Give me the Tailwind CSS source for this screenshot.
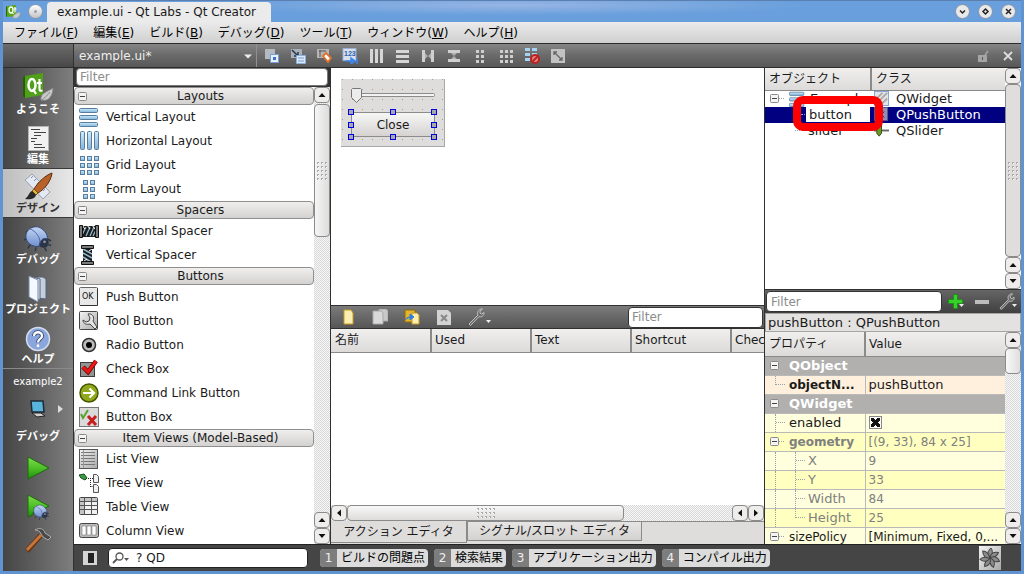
<!DOCTYPE html>
<html lang="ja">
<head>
    <meta charset="UTF-8">
    <meta name="viewport" content="width=device-width, initial-scale=1.0">
    <title>example.ui - Qt Labs - Qt Creator</title>
    <script src="https://cdn.jsdelivr.net/npm/@tailwindcss/browser@4"></script>
</head>
<body class="flex h-screen flex-col overflow-hidden bg-[#5f93d2] px-[3px] pb-[3px] font-['DejaVu_Sans','Noto_Sans_CJK_JP',sans-serif] text-[12px] leading-none text-[#1a1a1a]">

    <!-- shared shapes -->
    <svg class="absolute h-0 w-0">
        <defs>
            <linearGradient id="blue" x1="0" y1="0" x2="0" y2="1"><stop offset="0" stop-color="#d0ecfc"/><stop offset="1" stop-color="#7fb4dc"/></linearGradient>
            <linearGradient id="grey" x1="0" y1="0" x2="1" y2="1"><stop offset="0" stop-color="#f4f4f4"/><stop offset="1" stop-color="#a8a8a8"/></linearGradient>
            <linearGradient id="green" x1="0" y1="0" x2="0" y2="1"><stop offset="0" stop-color="#7fdc4c"/><stop offset="0.500" stop-color="#4fc028"/><stop offset="1" stop-color="#1f8d0c"/></linearGradient>
            <linearGradient id="bug" x1="0" y1="0" x2="0" y2="1"><stop offset="0" stop-color="#c3d6f5"/><stop offset="1" stop-color="#6f8fcf"/></linearGradient>
        </defs>
        <symbol id="up" viewBox="0 0 8 8"><path d="M0.500 6L4 2L7.500 6z" fill="#111"/></symbol>
        <symbol id="down" viewBox="0 0 8 8"><path d="M0.500 2L4 6L7.500 2z" fill="#111"/></symbol>
        <symbol id="left" viewBox="0 0 8 8"><path d="M6 0.500L2 4L6 7.500z" fill="#111"/></symbol>
        <symbol id="right" viewBox="0 0 8 8"><path d="M2 0.500L6 4L2 7.500z" fill="#111"/></symbol>
        <symbol id="minus" viewBox="0 0 9 9"><rect x="0.500" y="0.500" width="8" height="8" rx="1" fill="#f4f4f4" stroke="#8a8a8a"/><path d="M2 4.500h5" stroke="#444"/></symbol>
        <symbol id="grip" viewBox="0 0 12 20">
            <path d="M1 1h2v2h-2zM5 1h2v2h-2zM9 1h2v2h-2zM1 5h2v2h-2zM5 5h2v2h-2zM9 5h2v2h-2zM1 9h2v2h-2zM5 9h2v2h-2zM9 9h2v2h-2zM1 13h2v2h-2zM5 13h2v2h-2zM9 13h2v2h-2zM1 17h2v2h-2zM5 17h2v2h-2zM9 17h2v2h-2z" fill="#a9a9a9"/>
            <path d="M2 2h1v1h-1zM6 2h1v1h-1zM10 2h1v1h-1zM2 6h1v1h-1zM6 6h1v1h-1zM10 6h1v1h-1zM2 10h1v1h-1zM6 10h1v1h-1zM10 10h1v1h-1zM2 14h1v1h-1zM6 14h1v1h-1zM10 14h1v1h-1zM2 18h1v1h-1zM6 18h1v1h-1zM10 18h1v1h-1z" fill="#fff"/>
        </symbol>
        <symbol id="beetle" viewBox="0 0 30 30">
            <path d="M5 9l-3 -2M3 15l-3 1M7 21l-3 4M13 24l-1 4M25 15l4 2M22 24l2 4M26 21l3 1" stroke="#2a3550" stroke-width="1.500" fill="none"/>
            <circle cx="21" cy="19" r="5.500" fill="#2c3448"/>
            <path d="M2 12C2 5 9 1 15 2C21 4 26 10 25 15C21 13 17 16 16 23C9 24 2 19 2 12z" fill="url(#bug)" stroke="#33456e"/>
            <path d="M6 4C12 6 18 13 17 20" stroke="#4a60a0" fill="none"/>
            <circle cx="22" cy="18" r="1.500" fill="#8a93a8"/>
        </symbol>
        <symbol id="wrench" viewBox="0 0 18 18"><path d="M1 16L2.500 17.500L11 8.500C13 9.500 16.500 8 16 4.500L13.500 6L12 5L12 3L14.500 1C11 0.500 8.500 4 10 7z" fill="#6b6b6b" stroke="#c4c4c4"/></symbol>
        <symbol id="vlay" viewBox="0 0 20 20"><g fill="url(#blue)" stroke="#5a7d9c"><rect x="0.500" y="1.500" width="18" height="4" rx="1"/><rect x="0.500" y="8.500" width="18" height="4" rx="1"/><rect x="0.500" y="15.500" width="18" height="4" rx="1"/></g></symbol>
    </svg>

    <!-- window title -->
    <header class="flex h-[22px] shrink-0 items-center border-t border-[#5b7fae] bg-[radial-gradient(ellipse_at_50%_20%,#97b5e4_0%,#689fdc_42%)] pr-[5px] pl-[2px]">
        <svg class="h-4 w-4" viewBox="0 0 16 16"><path d="M2 2l9-1v11l-9 1z" fill="#58a618"/><path d="M1 3l1-1v11l-1-1z" fill="#2c6a08"/><ellipse cx="6" cy="6" rx="2" ry="3" fill="none" stroke="#fff" stroke-width="1.300"/><path d="M7 8l1.500 2M10 3v5.500M8.500 5h3" stroke="#fff" stroke-width="1.200"/><path d="M8 14C8 10 12 9 15.500 8C15 12 13 15 9 14z" fill="#c9c9c9" stroke="#8c9c8c" stroke-width="0.500"/></svg>
        <button class="ml-[7px] h-[15px] w-[15px] rounded-full border border-[#8797ad] bg-linear-to-b from-white to-[#c4c4c4]" aria-label="Window menu"><span class="mx-auto block h-[3px] w-[3px] rounded-full bg-gray-400"></span></button>
        <h1 class="mt-px ml-[4px] flex h-[21px] items-center rounded-t bg-[#ebebeb] pr-[15px] pl-[10px] text-[12px]">example.ui - Qt Labs - Qt Creator</h1>
        <div class="ml-auto flex gap-2">
            <button aria-label="Minimize"><svg class="h-[15px] w-[15px]" viewBox="0 0 15 15"><circle cx="7.500" cy="7.500" r="7" fill="#e9e9e9" stroke="#8592a5"/><path d="M5 6.500l2.500 2.500L10 6.500" stroke="#222" stroke-width="1.500" fill="none"/></svg></button>
            <button aria-label="Maximize"><svg class="h-[15px] w-[15px]" viewBox="0 0 15 15"><circle cx="7.500" cy="7.500" r="7" fill="#e9e9e9" stroke="#8592a5"/><path d="M7.500 5l2.500 2.500l-2.500 2.500L5 7.500z" stroke="#222" stroke-width="1.500" fill="none"/></svg></button>
            <button aria-label="Close window"><svg class="h-[15px] w-[15px]" viewBox="0 0 15 15"><circle cx="7.500" cy="7.500" r="7" fill="#e9e9e9" stroke="#8592a5"/><path d="M5 5l5 5M10 5l-5 5" stroke="#222" stroke-width="1.500"/></svg></button>
        </div>
    </header>

    <nav class="flex h-[21px] shrink-0 items-center gap-[15px] bg-linear-to-b from-[#ebebeb] to-[#cfcfcf] pt-px pl-[11px] whitespace-nowrap text-black">
        <button>ファイル(<u>F</u>)</button>
        <button>編集(<u>E</u>)</button>
        <button>ビルド(<u>B</u>)</button>
        <button>デバッグ(<u>D</u>)</button>
        <button>ツール(<u>T</u>)</button>
        <button>ウィンドウ(<u>W</u>)</button>
        <button>ヘルプ(<u>H</u>)</button>
    </nav>

    <!-- form editor toolbar -->
    <div class="flex h-[25px] shrink-0 items-stretch border-y border-[#2c2c2c] bg-linear-to-b from-[#858585] via-[#6a6a6a] to-[#585858]">
        <div class="w-[71px] shrink-0 border-r border-[#303030] bg-linear-to-b from-[#6c6c6c] to-[#484848]"></div>
        <div class="relative w-[183px] shrink-0 border-r border-[#909090]">
            <select aria-label="Open document" class="h-full w-full appearance-none bg-transparent pl-[5px] text-[12px] text-[#eee]"><option>example.ui*</option></select>
            <svg class="pointer-events-none absolute top-2 right-[4px] h-2 w-2" viewBox="0 0 8 8"><path d="M0 2.500h8l-4 4z" fill="#eee"/></svg>
        </div>
        <div class="flex items-center gap-[10px] pl-[7px]">
            <button aria-label="Edit widgets"><svg class="h-4 w-4" viewBox="0 0 16 16"><rect x="1" y="1" width="10" height="10" fill="#b5bac0"/><rect x="6.500" y="6.500" width="8" height="8" fill="#e6f0fc" stroke="#79a0d4"/><rect x="9" y="9" width="3" height="3" fill="#3974c8"/></svg></button>
            <button aria-label="Edit signals and slots"><svg class="h-4 w-4" viewBox="0 0 16 16"><rect x="1" y="1" width="11" height="9" fill="#aab0b8"/><path d="M2 2l6 6M8 4v4h-4" stroke="#26384e" stroke-width="1.500" fill="none"/><path d="M6.500 7.500h9v8h-9z" fill="#dce9fb" stroke="#8caedb"/><path d="M8 10h6M8 13h6" stroke="#7799cf"/></svg></button>
            <button aria-label="Edit buddies"><svg class="h-4 w-4" viewBox="0 0 16 16"><rect x="1" y="1" width="12" height="9" fill="#b5b5b5"/><path d="M3 3h7M4 2v7" stroke="#555"/><path d="M7 8l3-3l5 5l-3 4z" fill="#fff" stroke="#e0702c" stroke-width="1.800"/></svg></button>
            <button aria-label="Edit tab order"><svg class="h-4 w-4" viewBox="0 0 16 16"><rect x="1" y="0.500" width="13" height="12" fill="#d8e0ec" stroke="#9ab2d5"/><text x="2" y="8" font-family="Liberation Sans" font-size="7" font-weight="bold" fill="#2d61ac">123</text><path d="M3 13h8M9 10l4 3l-4 3zM15 10v6" stroke="#3e86e8" stroke-width="1.500" fill="#3e86e8"/></svg></button>
            <button aria-label="Lay out horizontally"><svg class="h-4 w-4" viewBox="0 0 16 16"><path d="M2 1h3v14h-3zM7 1h3v14h-3zM12 1h3v14h-3z" fill="#d6d6d6"/></svg></button>
            <button aria-label="Lay out vertically"><svg class="h-4 w-4" viewBox="0 0 16 16"><path d="M2 2h13v3h-13zM2 7h13v3h-13zM2 12h13v3h-13z" fill="#d6d6d6"/></svg></button>
            <button aria-label="Horizontal splitter"><svg class="h-4 w-4" viewBox="0 0 16 16"><path d="M2 2h3v12h-3zM11 2h3v12h-3z" fill="#cfcfcf"/><path d="M5 5v6l3-3zM11 5v6l-3-3z" fill="#b0b0b0"/></svg></button>
            <button aria-label="Vertical splitter"><svg class="h-4 w-4" viewBox="0 0 16 16"><path d="M2 2h12v3h-12zM2 11h12v3h-12z" fill="#cfcfcf"/><path d="M5 5h6l-3 3zM5 11h6l-3-3z" fill="#b0b0b0"/></svg></button>
            <button aria-label="Form layout"><svg class="h-4 w-4" viewBox="0 0 16 16"><path d="M4 2h3v3h-3zM9 2h3v3h-3zM4 7h3v3h-3zM9 7h3v3h-3zM4 12h3v3h-3zM9 12h3v3h-3z" fill="#cfcfcf"/></svg></button>
            <button aria-label="Grid layout"><svg class="h-4 w-4" viewBox="0 0 16 16"><path d="M2 2h3v3h-3zM7 2h3v3h-3zM12 2h3v3h-3zM2 7h3v3h-3zM7 7h3v3h-3zM12 7h3v3h-3zM2 12h3v3h-3zM7 12h3v3h-3zM12 12h3v3h-3z" fill="#cfcfcf"/></svg></button>
            <button aria-label="Break layout"><svg class="h-4 w-4" viewBox="0 0 16 16"><path d="M1 0h5v3h-5zM8 0h5v3h-5zM1 5h5v3h-5zM8 5h5v3h-5zM1 10h5v3h-5z" fill="#a6d3f2"/><circle cx="11" cy="11" r="4" fill="#d88" stroke="#c02020" stroke-width="2"/><path d="M8 14l6-6" stroke="#c02020" stroke-width="2"/></svg></button>
            <button aria-label="Adjust size"><svg class="h-4 w-4" viewBox="0 0 16 16"><rect x="1" y="1" width="14" height="14" fill="#c2c2c2"/><path d="M4 4l8 8M4 7v-3h3M12 9v3h-3" stroke="#666" stroke-width="1.300" fill="none"/></svg></button>
        </div>
        <div class="ml-auto flex items-center gap-[13px] pr-[7px]">
            <button aria-label="Lock"><svg class="h-3 w-3" viewBox="0 0 12 12"><rect x="1" y="5" width="9" height="7" fill="#a5a5a5"/><path d="M8 5l3-4" stroke="#a5a5a5" stroke-width="1.500"/><path d="M5.500 7v3" stroke="#555"/></svg></button>
            <button aria-label="Close document"><svg class="h-3 w-3" viewBox="0 0 12 12"><path d="M2 2l8 8M10 2l-8 8" stroke="#dcdcdc" stroke-width="1.800"/></svg></button>
        </div>
    </div>

    <div class="flex min-h-0 grow">
        <!-- mode selector -->
        <aside class="flex w-[71px] shrink-0 flex-col border-r border-[#303030] bg-linear-to-r from-[#454545] to-[#7e7e7e] text-[11px] font-bold text-white">
            <button class="flex h-[50px] shrink-0 flex-col items-center justify-end gap-px pb-[3px]">
                <svg class="h-8 w-8" viewBox="0 0 32 32"><path d="M3 5l18-3v22l-18 3z" fill="#4f9f18"/><path d="M1 6l2-1v22l-2-2z" fill="#245c08"/><ellipse cx="10" cy="14" rx="3.500" ry="6" fill="none" stroke="#fff" stroke-width="2.500"/><path d="M11 18l3 5M17.500 8v10c0 2 1 2 3 1.500M15 12h5" stroke="#fff" stroke-width="2.200" fill="none"/><path d="M19 29C18 22 25 21 31 17C31 24 27 31 20 29z" fill="#c9c9c9" stroke="#888"/><path d="M19 30C22 27 26 24 28 21" stroke="#888" fill="none"/></svg>
                ようこそ
            </button>
            <button class="flex h-[50px] shrink-0 flex-col items-center justify-end gap-px pb-[3px]">
                <svg class="h-7 w-7" viewBox="0 0 28 28"><rect x="4.500" y="1.500" width="20" height="24" fill="#f1f1f1" stroke="#b5b5b5"/><path d="M7 4.500h9M10 7.500h12M10 10.500h7M7 13.500h6M7 16.500h4M10 19.500h8M10 22.500h11" stroke="#444"/></svg>
                編集
            </button>
            <button class="flex h-[50px] shrink-0 flex-col items-center justify-end gap-px border-y border-[#3a3a3a] bg-linear-to-r from-[#bdbdbd] to-[#e8e8e8] pb-[3px] text-[#333]">
                <svg class="h-8 w-8" viewBox="0 0 32 32"><path d="M3 10l7-6l18 18l-7 7z" fill="#e3e8f2" stroke="#9aa3b5"/><path d="M9 8l2-2M12 11l2-2M15 14l2-2M18 18l3-2M21 21l2-2" stroke="#8891a3"/><path d="M30 3C24 5 16 12 12 19L16 23C23 19 29 11 30 3z" fill="#b8622a" stroke="#5a2c0c"/><path d="M12 19l-2 2l4 4l2-2z" fill="#e0b440" stroke="#7a5a10"/><path d="M10 21C7 22 7 26 3 29C8 30 13 29 14 25z" fill="#2a2a2a"/></svg>
                デザイン
            </button>
            <button class="flex h-[50px] shrink-0 flex-col items-center justify-end gap-px pb-[3px]">
                <svg class="h-7 w-7"><use href="#beetle"/></svg>
                デバッグ
            </button>
            <button class="flex h-[50px] shrink-0 flex-col items-center justify-end gap-px pb-[3px]">
                <svg class="h-7 w-7" viewBox="0 0 28 28"><path d="M13 2h6l3 2v20l-9-1z" fill="#c4cede" stroke="#59647a"/><path d="M9 2l7 2v21l-7-3z" fill="#e2e9f4" stroke="#59647a"/><path d="M5 1l9 4v22l-9-5z" fill="#f4f8ff" stroke="#7788a5"/></svg>
                プロジェクト
            </button>
            <button class="flex h-[50px] shrink-0 flex-col items-center justify-end gap-px pb-[3px]">
                <svg class="h-7 w-7" viewBox="0 0 28 28"><circle cx="14" cy="14" r="11.500" fill="#8ba6dc" stroke="#d5def0" stroke-width="1.500"/><path d="M10 11c0-5 8-5 8 0c0 3-4 3-4 6.500" stroke="#33456e" stroke-width="4" fill="none"/><path d="M10 11c0-5 8-5 8 0c0 3-4 3-4 6.500M14 19.500v2.500" stroke="#fff" stroke-width="2.300" fill="none"/></svg>
                ヘルプ
            </button>
            <div class="flex grow flex-col items-center border-t border-[#8a8a8a] pt-2">
                <span class="text-[10px] font-normal">example2</span>
                <button class="mt-3 flex items-center gap-2 pl-4" aria-label="Build target"><svg class="h-5 w-5" viewBox="0 0 20 20"><path d="M3 2h12l1 11h-12z" fill="#59b4dd" stroke="#1d2a38" stroke-width="1.500"/><path d="M4 14h9l4 3l-8 1z" fill="#d0d0d0" stroke="#222"/></svg><svg class="h-2 w-2" viewBox="0 0 8 8"><path d="M2 0l5 4l-5 4z" fill="#ddd"/></svg></button>
                <span class="mt-3">デバッグ</span>
                <button class="mt-3" aria-label="Run"><svg class="h-7 w-7" viewBox="0 0 28 28"><path d="M4 3l21 11l-21 11z" fill="url(#green)" stroke="#1b6b0c"/></svg></button>
                <button class="mt-3" aria-label="Start debugging"><svg class="h-7 w-7" viewBox="0 0 28 28"><path d="M4 1l21 11l-21 11z" fill="url(#green)" stroke="#1b6b0c"/><use href="#beetle" x="8" y="10" width="18" height="17"/></svg></button>
                <button class="mt-1" aria-label="Build"><svg class="h-7 w-7" viewBox="0 0 28 28"><path d="M3 25L17 9" stroke="#6b3210" stroke-width="5"/><path d="M3 24L17 9" stroke="#c2783c" stroke-width="3"/><path d="M11 4C16 1 20 3 21 7L27 11L24 14L19 11L17 8C16 5 14 4 11 4z" fill="#4a4a4a" stroke="#aaa"/></svg></button>
            </div>
        </aside>

        <div class="flex min-w-0 grow flex-col">
            <div class="flex min-h-0 grow bg-white">
                <!-- widget box -->
                <section class="flex w-[257px] shrink-0 flex-col border-r border-[#303030]">
                    <div class="h-[19px] shrink-0 bg-[#333] px-[2px] pb-px"><input type="text" placeholder="Filter" aria-label="Filter widgets" class="block h-[18px] w-full rounded-sm border border-[#777] bg-white px-[3px] text-[12px] placeholder:text-[#8c8c8c]"></div>
                    <div class="flex min-h-0 grow">
                        <div class="min-w-0 grow overflow-hidden">
                            <h2 class="flex h-[18px] items-center rounded-sm border border-[#8f8f8f] bg-linear-to-b from-[#f0efee] to-[#d3d2d1] px-[3px]"><svg class="h-[9px] w-[9px]"><use href="#minus"/></svg><span class="grow pl-1 text-center">Layouts</span></h2>
                            <ul>
                                <li class="flex h-6 items-center gap-[7px] pl-[5px]"><svg class="h-5 w-5"><use href="#vlay"/></svg>Vertical Layout</li>
                                <li class="flex h-6 items-center gap-[7px] pl-[5px]"><svg class="h-5 w-5" viewBox="0 0 20 20"><g fill="url(#blue)" stroke="#5a7d9c"><rect x="1.500" y="0.500" width="4" height="18" rx="1"/><rect x="8.500" y="0.500" width="4" height="18" rx="1"/><rect x="15.500" y="0.500" width="4" height="18" rx="1"/></g></svg>Horizontal Layout</li>
                                <li class="flex h-6 items-center gap-[7px] pl-[5px]"><svg class="h-5 w-5" viewBox="0 0 20 20"><g fill="url(#blue)" stroke="#5a7d9c"><rect x="1.500" y="1.500" width="4" height="4"/><rect x="8.500" y="1.500" width="4" height="4"/><rect x="15.500" y="1.500" width="4" height="4"/><rect x="1.500" y="8.500" width="4" height="4"/><rect x="8.500" y="8.500" width="4" height="4"/><rect x="15.500" y="8.500" width="4" height="4"/><rect x="1.500" y="15.500" width="4" height="4"/><rect x="8.500" y="15.500" width="4" height="4"/><rect x="15.500" y="15.500" width="4" height="4"/></g></svg>Grid Layout</li>
                                <li class="flex h-6 items-center gap-[7px] pl-[5px]"><svg class="h-5 w-5" viewBox="0 0 20 20"><g fill="url(#blue)" stroke="#5a7d9c"><rect x="4.500" y="1.500" width="4" height="4"/><rect x="11.500" y="1.500" width="4" height="4"/><rect x="4.500" y="8.500" width="4" height="4"/><rect x="11.500" y="8.500" width="4" height="4"/><rect x="4.500" y="15.500" width="4" height="4"/><rect x="11.500" y="15.500" width="4" height="4"/></g></svg>Form Layout</li>
                            </ul>
                            <h2 class="flex h-[18px] items-center rounded-sm border border-[#8f8f8f] bg-linear-to-b from-[#f0efee] to-[#d3d2d1] px-[3px]"><svg class="h-[9px] w-[9px]"><use href="#minus"/></svg><span class="grow pl-1 text-center">Spacers</span></h2>
                            <ul>
                                <li class="flex h-6 items-center gap-[7px] pl-[5px]"><svg class="h-5 w-5" viewBox="0 0 20 20"><path d="M3 5h14v11h-14z" fill="#1c1c1c"/><path d="M3 14L7 6M7 15L11 6M11 15L15 6M14 15L17 9" stroke="#8fb8cc" stroke-width="1.300"/><path d="M3 4l3 4M8 4l3 4M13 4l3 4" stroke="#fff"/><path d="M0.500 4.500h3v12h-3zM16.500 4.500h3v12h-3z" fill="#7a7a7a" stroke="#111"/></svg>Horizontal Spacer</li>
                                <li class="flex h-6 items-center gap-[7px] pl-[5px]"><svg class="h-5 w-5" viewBox="0 0 20 20"><path d="M4 3h9v14h-9z" fill="#1c1c1c"/><path d="M4 4L13 9M4 8L13 13M4 12L12 17" stroke="#8fb8cc" stroke-width="1.500"/><path d="M13 4l-3 2M5 16l3-2" stroke="#fff"/><path d="M2.500 0.500h12v3h-12zM2.500 16.500h12v3h-12z" fill="#7a7a7a" stroke="#111"/></svg>Vertical Spacer</li>
                            </ul>
                            <h2 class="flex h-[18px] items-center rounded-sm border border-[#8f8f8f] bg-linear-to-b from-[#f0efee] to-[#d3d2d1] px-[3px]"><svg class="h-[9px] w-[9px]"><use href="#minus"/></svg><span class="grow pl-1 text-center">Buttons</span></h2>
                            <ul>
                                <li class="flex h-6 items-center gap-[7px] pl-[5px]"><svg class="h-5 w-5" viewBox="0 0 20 20"><rect x="0.500" y="0.500" width="18" height="18" rx="1" fill="#e8e8e8" stroke="#666"/><path d="M1 18.500h17.500v-17" stroke="#333" fill="none"/><text x="3" y="12" font-family="DejaVu Sans" font-size="8" fill="#111">OK</text></svg>Push Button</li>
                                <li class="flex h-6 items-center gap-[7px] pl-[5px]"><svg class="h-5 w-5" viewBox="0 0 20 20"><rect x="0.500" y="0.500" width="18" height="18" rx="1" fill="url(#grey)" stroke="#444"/><path d="M9 3C13 2 16 6 14 10L18 16L16 18L11 13C8 14 4 13 4 9L7 11L10 10L11 7z" fill="#e4e4e4" stroke="#444"/></svg>Tool Button</li>
                                <li class="flex h-6 items-center gap-[7px] pl-[5px]"><svg class="h-5 w-5" viewBox="0 0 20 20"><circle cx="10" cy="10" r="6.500" fill="#bdbdbd" stroke="#333" stroke-width="1.500"/><circle cx="10" cy="10" r="3" fill="#000"/></svg>Radio Button</li>
                                <li class="flex h-6 items-center gap-[7px] pl-[5px]"><svg class="h-5 w-5" viewBox="0 0 20 20"><rect x="1.500" y="3.500" width="14" height="14" fill="#929292" stroke="#3a3a3a"/><path d="M4 8l5 5L17 2" stroke="#6b0505" stroke-width="4.500" fill="none"/><path d="M4 8l5 5L17 2" stroke="#ea1515" stroke-width="3" fill="none"/></svg>Check Box</li>
                                <li class="flex h-6 items-center gap-[7px] pl-[5px]"><svg class="h-5 w-5" viewBox="0 0 20 20"><circle cx="10" cy="10" r="9" fill="#8fa81c" stroke="#4a5700" stroke-width="1.500"/><path d="M4 10h11M10.500 5.500l4.500 4.500l-4.500 4.500" stroke="#fff" stroke-width="2.200" fill="none"/></svg>Command Link Button</li>
                                <li class="flex h-6 items-center gap-[7px] pl-[5px]"><svg class="h-5 w-5" viewBox="0 0 20 20"><rect x="0.500" y="0.500" width="19" height="19" fill="#dadada" stroke="#777"/><path d="M2 7l2 4l5-8" stroke="#56a42d" stroke-width="2" fill="none"/><path d="M9 9l8 9M17 9l-8 9" stroke="#c51f1f" stroke-width="3"/></svg>Button Box</li>
                            </ul>
                            <h2 class="flex h-[18px] items-center rounded-sm border border-[#8f8f8f] bg-linear-to-b from-[#f0efee] to-[#d3d2d1] px-[3px]"><svg class="h-[9px] w-[9px]"><use href="#minus"/></svg><span class="grow pl-1 text-center">Item Views (Model-Based)</span></h2>
                            <ul>
                                <li class="flex h-6 items-center gap-[7px] pl-[5px]"><svg class="h-5 w-5" viewBox="0 0 20 20"><rect x="0.500" y="0.500" width="18" height="19" fill="url(#grey)" stroke="#555"/><path d="M2 3.500h14M2 6.500h14M2 9.500h14M2 12.500h14M2 15.500h14" stroke="#777"/><path d="M4.500 1v18" stroke="#999"/></svg>List View</li>
                                <li class="flex h-6 items-center gap-[7px] pl-[5px]"><svg class="h-5 w-5" viewBox="0 0 20 20"><path d="M0 2L5 1L8 5L6 7L2 5z" fill="#3a9b45" stroke="#144a1c"/><path d="M9 5.500h5M11.500 5v9M11.500 13.500h3" stroke="#222" stroke-dasharray="1 1" fill="none"/><path d="M14.500 1.500h3l2 2v6h-5zM14.500 11.500h3l2 2v6h-5z" fill="#f0f0f0" stroke="#555"/></svg>Tree View</li>
                                <li class="flex h-6 items-center gap-[7px] pl-[5px]"><svg class="h-5 w-5" viewBox="0 0 20 20"><rect x="0.500" y="0.500" width="18" height="17" rx="1" fill="#f1f1f1" stroke="#444"/><path d="M1 1h17v3h-17zM1 4h4v13h-4z" fill="#c4c4c4"/><path d="M1 4.500h18M1 8.500h18M1 12.500h18M5.500 1v17M12.500 1v17" stroke="#555"/></svg>Table View</li>
                                <li class="flex h-6 items-center gap-[7px] pl-[5px]"><svg class="h-5 w-5" viewBox="0 0 20 20"><rect x="0.500" y="2.500" width="19" height="14" rx="2" fill="#bbb" stroke="#444"/><path d="M3 5h4v9h-4zM8 5h4v9h-4zM13 5h4v9h-4z" fill="#fff" stroke="#666" stroke-width="0.500"/></svg>Column View</li>
                            </ul>
                        </div>
                        <div class="flex w-4 shrink-0 flex-col bg-[repeating-conic-gradient(#d9d9d9_0_25%,#f6f6f6_0_50%)] bg-[length:2px_2px]">
                            <button aria-label="Scroll up" class="flex h-4 items-center justify-center rounded-sm border border-[#8a8a8a] bg-[#eeedec]"><svg class="h-2 w-2"><use href="#up"/></svg></button>
                            <div class="mt-px flex h-[133px] items-center justify-center rounded-sm border border-[#8a8a8a] bg-linear-to-r from-[#f6f6f6] to-[#dddcdb]"><svg class="h-5 w-3"><use href="#grip"/></svg></div>
                            <button aria-label="Scroll up" class="mt-auto flex h-4 items-center justify-center rounded-sm border border-[#8a8a8a] bg-[#eeedec]"><svg class="h-2 w-2"><use href="#up"/></svg></button>
                            <button aria-label="Scroll down" class="flex h-4 items-center justify-center rounded-sm border border-[#8a8a8a] bg-[#eeedec]"><svg class="h-2 w-2"><use href="#down"/></svg></button>
                        </div>
                    </div>
                </section>

                <section class="flex min-w-0 grow flex-col border-r border-[#303030]">
                    <!-- form canvas -->
                    <div class="h-[237px] shrink-0 pt-[11px] pl-[10px]">
                        <div class="relative h-[68px] w-[104px] border-r border-b border-[#a8a8a8] bg-[#dfdddc] px-[10px] pt-[9px]">
                            <svg class="absolute inset-0 h-full w-full"><pattern id="dots" width="10" height="10" patternUnits="userSpaceOnUse"><rect x="1" width="1" height="1" fill="#a0a0a0"/></pattern><rect width="100%" height="100%" fill="url(#dots)"/></svg>
                            <div class="relative h-[15px]">
                                <svg class="h-[15px] w-[84px]" viewBox="0 0 84 15"><rect x="2.500" y="5.500" width="81" height="3" rx="1" fill="#f3f3f3" stroke="#8b8b8b"/><path d="M1.500 0.500h8l1 1v8l-5 5l-5-5v-8z" fill="#ececec" stroke="#777"/></svg>
                                <input type="range" value="0" aria-label="slider" class="absolute inset-0 h-full w-full opacity-0">
                            </div>
                            <div class="relative mt-[9px]">
                                <button class="block h-[25px] w-[84px] border border-[#8b8b8b] bg-linear-to-b from-[#f7f7f6] to-[#d4d3d2]">Close</button>
                                <div class="absolute -inset-[3px] flex flex-col justify-between">
                                    <div class="flex justify-between"><i class="h-[6px] w-[6px] border border-[#0000e0] bg-[#a8a8a8]"></i><i class="h-[6px] w-[6px] border border-[#0000e0] bg-[#a8a8a8]"></i><i class="h-[6px] w-[6px] border border-[#0000e0] bg-[#a8a8a8]"></i></div>
                                    <div class="flex justify-between"><i class="h-[6px] w-[6px] border border-[#0000e0] bg-[#a8a8a8]"></i><i class="h-[6px] w-[6px] border border-[#0000e0] bg-[#a8a8a8]"></i></div>
                                    <div class="flex justify-between"><i class="h-[6px] w-[6px] border border-[#0000e0] bg-[#a8a8a8]"></i><i class="h-[6px] w-[6px] border border-[#0000e0] bg-[#a8a8a8]"></i><i class="h-[6px] w-[6px] border border-[#0000e0] bg-[#a8a8a8]"></i></div>
                                </div>
                            </div>
                        </div>
                    </div>

                    <!-- action editor -->
                    <div class="flex h-[24px] shrink-0 items-center border-y border-[#303030] bg-linear-to-b from-[#7b7b7b] to-[#565656] pl-[9px]">
                        <button aria-label="New action"><svg class="h-4 w-4" viewBox="0 0 16 16"><path d="M4 1h7l2 3v11h-9z" fill="#fbeeb0" stroke="#c99a25"/></svg></button>
                        <button class="ml-4" aria-label="Copy"><svg class="h-4 w-4" viewBox="0 0 16 16"><path d="M7 0h7l2 2v10h-9z" fill="#c9c9c9" stroke="#aaa"/><path d="M1 2h8l2 2v11h-10z" fill="#dadada" stroke="#aaa"/></svg></button>
                        <button class="ml-4" aria-label="Paste"><svg class="h-4 w-4" viewBox="0 0 16 16"><path d="M1 1h10v12h-10z" fill="#e5b52c" stroke="#8b6a10"/><path d="M8 4h5l2 2v9h-7z" fill="#fbeeb0" stroke="#c99a25"/><path d="M1 11C3 8 5 8 7 8M6 5l4 3l-4 3z" fill="#2e7fe0" stroke="#2e7fe0"/></svg></button>
                        <button class="ml-4" aria-label="Delete"><svg class="h-4 w-4" viewBox="0 0 16 16"><path d="M1 1h11l3 3v12h-14z" fill="#d3d3d3"/><path d="M5 6l6 6M11 6l-6 6" stroke="#888" stroke-width="2"/></svg></button>
                        <button class="ml-4 flex items-center" aria-label="Configure"><svg class="h-[18px] w-[18px]"><use href="#wrench"/></svg><svg class="mt-2 h-[5px] w-[5px]" viewBox="0 0 5 5"><path d="M0 1h5l-2.500 3z" fill="#eee"/></svg></button>
                        <input type="text" placeholder="Filter" aria-label="Filter actions" class="mr-px ml-auto h-[21px] w-[135px] rounded-sm border border-[#333] bg-white px-[3px] text-[12px] placeholder:text-[#8c8c8c]">
                    </div>
                    <div class="min-h-0 grow overflow-hidden">
                        <table class="w-[500px] table-fixed border-collapse text-left">
                            <thead><tr class="h-[23px] bg-linear-to-b from-[#f0efee] to-[#dcdbda]">
                                <th class="border-r-2 border-b border-[#8a8a8a] pl-1 font-normal">名前</th>
                                <th class="border-r-2 border-b border-[#8a8a8a] pl-[3px] font-normal">Used</th>
                                <th class="border-r-2 border-b border-[#8a8a8a] pl-[3px] font-normal">Text</th>
                                <th class="border-r-2 border-b border-[#8a8a8a] pl-[3px] font-normal">Shortcut</th>
                                <th class="border-b border-[#8a8a8a] pl-[3px] font-normal">Checkable</th>
                            </tr></thead>
                        </table>
                    </div>
                    <div class="flex h-4 shrink-0 bg-[repeating-conic-gradient(#d9d9d9_0_25%,#f6f6f6_0_50%)] bg-[length:2px_2px]">
                        <button aria-label="Scroll left" class="flex w-4 items-center justify-center rounded-sm border border-[#8a8a8a] bg-[#eeedec]"><svg class="h-2 w-2"><use href="#left"/></svg></button>
                        <div class="flex w-[277px] items-center justify-center rounded-sm border border-[#8a8a8a] bg-linear-to-b from-[#f8f8f8] to-[#dddcdb]"><svg class="h-5 w-3 rotate-90"><use href="#grip"/></svg></div>
                        <button aria-label="Scroll left" class="ml-auto flex w-4 items-center justify-center rounded-sm border border-[#8a8a8a] bg-[#eeedec]"><svg class="h-2 w-2"><use href="#left"/></svg></button>
                        <button aria-label="Scroll right" class="flex w-4 items-center justify-center rounded-sm border border-[#8a8a8a] bg-[#eeedec]"><svg class="h-2 w-2"><use href="#right"/></svg></button>
                    </div>
                    <div class="flex h-[23px] shrink-0 items-start bg-[#dfdddc]">
                        <button class="h-[22px] w-[136px] border-r border-b border-[#8a8a8a]">アクション エディタ</button>
                        <button class="h-[20px] w-[175px] border border-[#8a8a8a] bg-linear-to-b from-[#e6e5e4] to-[#d3d2d1]">シグナル/スロット エディタ</button>
                        <div class="grow border-t border-[#8a8a8a]"></div>
                    </div>
                </section>

                <section class="flex w-[256px] shrink-0 flex-col">
                    <!-- object tree -->
                    <div class="relative flex h-[221px] shrink-0">
                        <table class="h-fit grow table-fixed border-collapse text-left text-[13px]">
                            <thead><tr class="h-[22px] bg-linear-to-b from-[#f0efee] to-[#dcdbda] text-[12px]">
                                <th class="w-[106px] border-r-2 border-b border-[#8a8a8a] pl-1 font-normal">オブジェクト</th>
                                <th class="border-b border-[#8a8a8a] pl-1 font-normal">クラス</th>
                            </tr></thead>
                            <tbody>
                                <tr class="h-4">
                                    <td class="p-0"><div class="flex h-4 items-center pl-[5px]"><svg class="h-[9px] w-[9px]"><use href="#minus"/></svg><span class="mr-[5px] w-[5px] border-t border-dotted border-gray-400"></span><svg class="h-4 w-4"><use href="#vlay"/></svg><span class="ml-[5px]">Example</span></div></td>
                                    <td class="p-0"><div class="flex h-4 items-center gap-[7px] pl-[3px]"><svg class="h-[15px] w-[15px]" viewBox="0 0 16 16"><rect x="0.500" y="0.500" width="15" height="15" fill="#e4e4e4" stroke="#7ba2d8"/><path d="M2 9l7-7M2 14L14 2M8 14l6-6" stroke="#aaa" stroke-width="2"/></svg>QWidget</div></td>
                                </tr>
                                <tr class="h-4 bg-[#000080] text-white">
                                    <td class="p-0"><div class="flex h-4 items-center pl-[36px]"><span class="mr-px w-[4px] border-t border-dotted border-gray-400"></span><input type="text" value="button" aria-label="Object name" class="h-[15px] w-[64px] bg-white pl-[3px] text-[13px] text-[#1a1a1a]"></div></td>
                                    <td class="p-0"><div class="flex h-4 items-center gap-[7px] pl-[3px]"><svg class="h-[15px] w-[15px]" viewBox="0 0 16 16"><rect x="0.500" y="0.500" width="14" height="14" fill="#8f8fb5" stroke="#55558a"/><path d="M6 5v6M11 5l-4 3l4 3" stroke="#222250" fill="none"/></svg>QPushButton</div></td>
                                </tr>
                                <tr class="h-4">
                                    <td class="p-0"><div class="flex h-4 items-center pl-[30px]"><span class="mr-[6px] w-[7px] border-t border-dotted border-gray-400"></span>slider</div></td>
                                    <td class="p-0"><div class="flex h-4 items-center gap-[7px] pl-[3px]"><svg class="h-[15px] w-[15px]" viewBox="0 0 16 16"><path d="M0 8h16" stroke="#666" stroke-width="2"/><path d="M3 2h5v9l-2.500 3l-2.500-3z" fill="#6c9a20" stroke="#3a4f18"/></svg>QSlider</div></td>
                                </tr>
                            </tbody>
                        </table>
                        <div class="absolute top-[28px] left-[28px] h-[35px] w-[90px] rounded-[10px] border-8 border-[#ff0000]"></div>
                        <div class="flex w-4 shrink-0 flex-col">
                            <button aria-label="Scroll up" class="flex h-4 items-center justify-center rounded-sm border border-[#8a8a8a] bg-[#eeedec]"><svg class="h-2 w-2"><use href="#up"/></svg></button>
                            <div class="flex grow items-center justify-center rounded-sm border border-[#8a8a8a] bg-[#dfdedd]"><svg class="h-5 w-3"><use href="#grip"/></svg></div>
                            <button aria-label="Scroll up" class="flex h-4 items-center justify-center rounded-sm border border-[#8a8a8a] bg-[#eeedec]"><svg class="h-2 w-2"><use href="#up"/></svg></button>
                            <button aria-label="Scroll down" class="flex h-4 items-center justify-center rounded-sm border border-[#8a8a8a] bg-[#eeedec]"><svg class="h-2 w-2"><use href="#down"/></svg></button>
                        </div>
                    </div>

                    <!-- property editor -->
                    <div class="flex h-[24px] shrink-0 items-center border-t border-[#303030] bg-linear-to-b from-[#666] to-[#404040] pl-px">
                        <input type="text" placeholder="Filter" aria-label="Filter properties" class="h-[21px] w-[176px] rounded-sm border border-[#333] bg-white px-1 text-[12px] placeholder:text-[#8c8c8c]">
                        <button class="ml-[6px] flex items-center" aria-label="Add property"><svg class="h-[15px] w-[15px]" viewBox="0 0 15 15"><path d="M5.500 0.500h4v5h5v4h-5v5h-4v-5h-5v-4h5z" fill="#35d02a" stroke="#1c8f14"/></svg><svg class="-ml-1 mt-2 h-[5px] w-[5px]" viewBox="0 0 5 5"><path d="M0 1h5l-2.500 3z" fill="#eee"/></svg></button>
                        <button class="ml-[10px]" aria-label="Remove property"><svg class="h-4 w-4" viewBox="0 0 16 16"><rect x="1" y="6" width="14" height="4" fill="#bdbdbd"/></svg></button>
                        <button class="ml-[9px] flex items-center" aria-label="Configure"><svg class="h-[17px] w-[17px]"><use href="#wrench"/></svg><svg class="-ml-1 mt-2 h-[5px] w-[5px]" viewBox="0 0 5 5"><path d="M0 1h5l-2.500 3z" fill="#eee"/></svg></button>
                    </div>
                    <p class="flex h-[19px] shrink-0 items-center border border-[#a5a4a3] bg-[#e3e2e1] pl-[2px] text-[13px]">pushButton : QPushButton</p>
                    <div class="flex min-h-0 grow overflow-hidden">
                        <div class="min-w-0 grow overflow-hidden">
                            <table class="w-full table-fixed border-collapse text-left text-[13px] whitespace-nowrap">
                                <thead><tr class="h-6 bg-linear-to-b from-[#f0efee] to-[#dcdbda] text-[12px]">
                                    <th class="w-[100px] border-r-2 border-b border-[#8a8a8a] pl-1 font-normal">プロパティ</th>
                                    <th class="border-b border-[#8a8a8a] pl-[3px] font-normal">Value</th>
                                </tr></thead>
                                <tbody>
                                    <tr class="h-[19px] border-b border-[#b9b9b9] bg-[#b1b0af] font-bold text-white"><td colspan="2" class="p-0"><div class="flex items-center gap-[10px] pl-[5px]"><svg class="h-[9px] w-[9px]"><use href="#minus"/></svg>QObject</div></td></tr>
                                    <tr class="h-[19px] border-b border-[#b9b9b9] bg-[#fff0dd]"><td class="border-r border-[#b9b9b9] p-0 font-bold"><div class="flex items-center pl-[10px]"><span class="mr-[4px] -mt-[9px] h-[9px] w-[10px] border-b border-l border-dotted border-gray-400"></span><span class="text-[12px]">objectN...</span></div></td><td class="p-0 pl-[3px]">pushButton</td></tr>
                                    <tr class="h-[19px] border-b border-[#b9b9b9] bg-[#b1b0af] font-bold text-white"><td colspan="2" class="p-0"><div class="flex items-center gap-[10px] pl-[5px]"><svg class="h-[9px] w-[9px]"><use href="#minus"/></svg>QWidget</div></td></tr>
                                    <tr class="h-[19px] border-b border-[#b9b9b9] bg-[#ffffdd]"><td class="border-r border-[#b9b9b9] p-0"><div class="flex h-[18px] items-center pl-[10px]"><span class="h-full border-l border-dotted border-gray-400"></span><span class="mr-[4px] w-[9px] border-t border-dotted border-gray-400"></span>enabled</div></td><td class="p-0 pl-[3px]"><input type="checkbox" checked aria-label="enabled" class="block h-[13px] w-[13px] appearance-none border border-[#888] bg-[#fafafa] bg-[linear-gradient(45deg,transparent_38%,#111_38%_62%,transparent_62%),linear-gradient(-45deg,transparent_38%,#111_38%_62%,transparent_62%)] bg-[length:9px_9px] bg-center bg-no-repeat"></td></tr>
                                    <tr class="h-[19px] border-b border-[#b9b9b9] bg-[#ffffbf] text-[#808080]"><td class="border-r border-[#b9b9b9] p-0 font-bold"><div class="flex items-center pl-[5px]"><svg class="h-[9px] w-[9px]"><use href="#minus"/></svg><span class="mr-[5px] w-[5px] border-t border-dotted border-gray-400"></span><span class="text-[12px]">geometry</span></div></td><td class="p-0 pl-[3px] text-[12px]">[(9, 33), 84 x 25]</td></tr>
                                    <tr class="h-[19px] border-b border-[#b9b9b9] bg-[#ffffdd] text-[#808080]"><td class="border-r border-[#b9b9b9] p-0"><div class="flex h-[18px] items-center pl-[10px]"><span class="mr-[19px] h-full border-l border-dotted border-gray-400"></span><span class="h-full border-l border-dotted border-gray-400"></span><span class="mr-[3px] w-[9px] border-t border-dotted border-gray-400"></span>X</div></td><td class="p-0 pl-[3px] text-[12px]">9</td></tr>
                                    <tr class="h-[19px] border-b border-[#b9b9b9] bg-[#ffffbf] text-[#808080]"><td class="border-r border-[#b9b9b9] p-0"><div class="flex h-[18px] items-center pl-[10px]"><span class="mr-[19px] h-full border-l border-dotted border-gray-400"></span><span class="h-full border-l border-dotted border-gray-400"></span><span class="mr-[3px] w-[9px] border-t border-dotted border-gray-400"></span>Y</div></td><td class="p-0 pl-[3px] text-[12px]">33</td></tr>
                                    <tr class="h-[19px] border-b border-[#b9b9b9] bg-[#ffffdd] text-[#808080]"><td class="border-r border-[#b9b9b9] p-0"><div class="flex h-[18px] items-center pl-[10px]"><span class="mr-[19px] h-full border-l border-dotted border-gray-400"></span><span class="h-full border-l border-dotted border-gray-400"></span><span class="mr-[3px] w-[9px] border-t border-dotted border-gray-400"></span>Width</div></td><td class="p-0 pl-[3px] text-[12px]">84</td></tr>
                                    <tr class="h-[19px] border-b border-[#b9b9b9] bg-[#ffffbf] text-[#808080]"><td class="border-r border-[#b9b9b9] p-0"><div class="flex h-[18px] items-center pl-[10px]"><span class="mr-[19px] h-full border-l border-dotted border-gray-400"></span><span class="h-1/2 self-start border-l border-dotted border-gray-400"></span><span class="mr-[3px] w-[9px] border-t border-dotted border-gray-400"></span>Height</div></td><td class="p-0 pl-[3px] text-[12px]">25</td></tr>
                                    <tr class="h-[19px] bg-[#ffffdd] text-[12px]"><td class="border-r border-[#b9b9b9] p-0"><div class="flex items-center pl-[5px]"><svg class="h-[9px] w-[9px]"><use href="#minus"/></svg><span class="mr-[5px] w-[5px] border-t border-dotted border-gray-400"></span>sizePolicy</div></td><td class="p-0 pl-[3px]">[Minimum, Fixed, 0,...</td></tr>
                                </tbody>
                            </table>
                        </div>
                        <div class="flex w-4 shrink-0 flex-col bg-[repeating-conic-gradient(#d9d9d9_0_25%,#f6f6f6_0_50%)] bg-[length:2px_2px]">
                            <button aria-label="Scroll up" class="flex h-4 items-center justify-center rounded-sm border border-[#8a8a8a] bg-[#eeedec]"><svg class="h-2 w-2"><use href="#up"/></svg></button>
                            <div class="h-[26px] rounded-sm border border-[#8a8a8a] bg-linear-to-r from-[#f8f8f8] to-[#e0dfde]"></div>
                            <button aria-label="Scroll up" class="mt-auto flex h-4 items-center justify-center rounded-sm border border-[#8a8a8a] bg-[#eeedec]"><svg class="h-2 w-2"><use href="#up"/></svg></button>
                            <button aria-label="Scroll down" class="flex h-4 items-center justify-center rounded-sm border border-[#8a8a8a] bg-[#eeedec]"><svg class="h-2 w-2"><use href="#down"/></svg></button>
                        </div>
                    </div>
                </section>
            </div>

            <!-- locator and output panes -->
            <footer class="flex h-[27px] shrink-0 items-center border-t border-[#222] bg-[#454545] pl-2 whitespace-nowrap">
                <button aria-label="Toggle sidebar"><svg class="h-4 w-4" viewBox="0 0 16 16"><rect x="1" y="1" width="14" height="14" fill="#d4d4d4"/><rect x="6" y="3" width="6" height="10" fill="#222"/></svg></button>
                <div class="relative ml-[10px]">
                    <input type="text" value="? QD" aria-label="Locator" class="block h-5 w-[200px] rounded-sm border border-[#222] bg-white pl-[27px] text-[12px]">
                    <svg class="absolute top-1 left-1 h-3 w-[18px]" viewBox="0 0 18 12"><circle cx="7.500" cy="4.500" r="3.500" fill="none" stroke="#555" stroke-width="1.300"/><path d="M5 7l-4 4" stroke="#555" stroke-width="1.800"/><path d="M12 6h5l-2.500 3z" fill="#555"/></svg>
                </div>
                <div class="ml-3 flex gap-[6px]">
                    <button class="flex h-[18px] items-stretch rounded-sm bg-[#dcdcdc] text-black"><span class="flex w-[17px] items-center justify-center rounded-l-sm bg-[#7d7d7d] text-[#eee]">1</span><span class="flex items-center pr-[3px] pl-[4px]">ビルドの問題点</span></button>
                    <button class="flex h-[18px] items-stretch rounded-sm bg-[#dcdcdc] text-black"><span class="flex w-[17px] items-center justify-center rounded-l-sm bg-[#7d7d7d] text-[#eee]">2</span><span class="flex items-center pr-[3px] pl-[4px]">検索結果</span></button>
                    <button class="flex h-[18px] items-stretch rounded-sm bg-[#dcdcdc] text-black"><span class="flex w-[17px] items-center justify-center rounded-l-sm bg-[#7d7d7d] text-[#eee]">3</span><span class="flex items-center pr-[3px] pl-[4px]">アプリケーション出力</span></button>
                    <button class="flex h-[18px] items-stretch rounded-sm bg-[#dcdcdc] text-black"><span class="flex w-[17px] items-center justify-center rounded-l-sm bg-[#7d7d7d] text-[#eee]">4</span><span class="flex items-center pr-[3px] pl-[4px]">コンパイル出力</span></button>
                </div>
                <svg class="mr-[20px] ml-auto h-6 w-[22px]" viewBox="0 0 22 24"><rect width="22" height="24" fill="url(#grey)"/><g fill="#8a8a8a" stroke="#444"><path id="blade" d="M11 12C8 9 8 5 12 2C14 5 14 8 11 12z"/><use href="#blade" transform="rotate(51 11 12)"/><use href="#blade" transform="rotate(103 11 12)"/><use href="#blade" transform="rotate(154 11 12)"/><use href="#blade" transform="rotate(206 11 12)"/><use href="#blade" transform="rotate(257 11 12)"/><use href="#blade" transform="rotate(308 11 12)"/></g></svg>
            </footer>
        </div>
    </div>
</body>
</html>
